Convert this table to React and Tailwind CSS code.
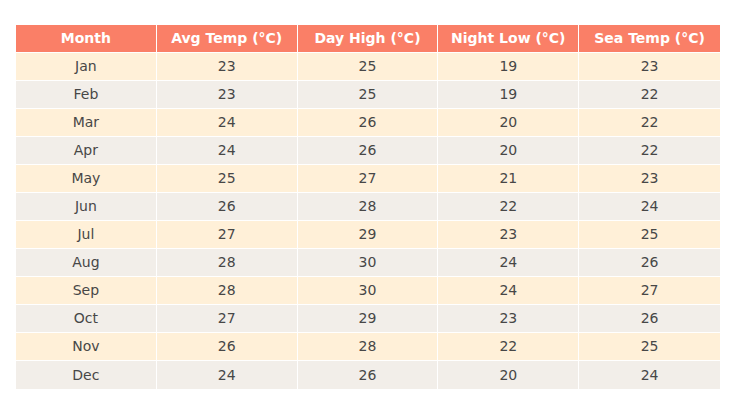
const rows = [
  ['Jan', 23, 25, 19, 23],
  ['Feb', 23, 25, 19, 22],
  ['Mar', 24, 26, 20, 22],
  ['Apr', 24, 26, 20, 22],
  ['May', 25, 27, 21, 23],
  ['Jun', 26, 28, 22, 24],
  ['Jul', 27, 29, 23, 25],
  ['Aug', 28, 30, 24, 26],
  ['Sep', 28, 30, 24, 27],
  ['Oct', 27, 29, 23, 26],
  ['Nov', 26, 28, 22, 25],
  ['Dec', 24, 26, 20, 24],
];

const headers = ['Month', 'Avg Temp (°C)', 'Day High (°C)', 'Night Low (°C)', 'Sea Temp (°C)'];

export default function App() {
  return (
    <div className="w-[735px] h-[413px] bg-white pt-[25px] pl-[16px] font-['DejaVu_Sans',sans-serif]">
      <table className="w-[704px] border-separate border-spacing-0 table-fixed text-[14px]">
        <thead>
          <tr className="bg-[#fa7f67] text-white">
            {headers.map((h, j) => (
              <th
                key={h}
                className={`h-[28px] p-0 border-b border-white font-bold text-center ${j < 4 ? 'border-r' : ''}`}
              >
                {h}
              </th>
            ))}
          </tr>
        </thead>
        <tbody>
          {rows.map((r, i) => (
            <tr key={r[0]} className={i % 2 === 0 ? 'bg-[#fff0d8]' : 'bg-[#f2eee9]'}>
              {r.map((c, j) => (
                <td
                  key={j}
                  className={`h-[28px] p-0 border-white text-center text-[#474747] ${j < 4 ? 'border-r' : ''} ${i < 11 ? 'border-b' : ''}`}
                >
                  {c}
                </td>
              ))}
            </tr>
          ))}
        </tbody>
      </table>
    </div>
  );
}
